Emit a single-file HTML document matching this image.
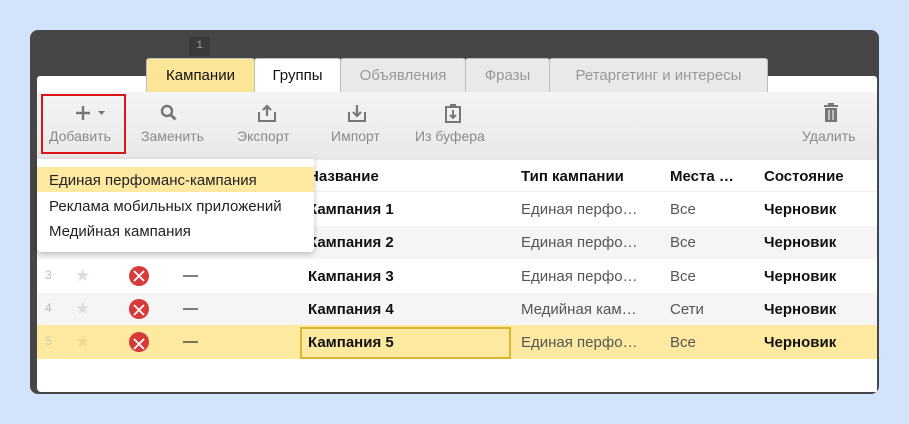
<!DOCTYPE html>
<html><head><meta charset="utf-8"><style>
*{margin:0;padding:0;box-sizing:border-box}
body{width:909px;height:424px;background:#d3e3fb;font-family:"Liberation Sans",sans-serif;position:relative;overflow:hidden}
.win{position:absolute;left:30px;top:30px;width:849px;height:364px;background:#464646;border-radius:8px}
.panel{position:absolute;left:37px;top:76px;width:840px;height:316px;background:#fff;border-radius:3px 3px 0 4px}
.num{position:absolute;left:189px;top:37px;width:21px;height:19px;background:#3a3a3a;color:#9a9a9a;font:11px "Liberation Mono",monospace;text-align:center;line-height:19px}
.tab{position:absolute;top:58px;height:34px;line-height:34px;font-size:15px;text-align:center;border:1px solid #bdbdbd;border-bottom:none;border-radius:3px 3px 0 0}
.tb{position:absolute;left:37px;top:92px;width:840px;height:68px;background:linear-gradient(#f4f4f4,#e8e8e8)}
.btn{position:absolute;top:128px;font-size:14px;color:#8a8a8a}
.ic{position:absolute;top:103px}
.row{position:absolute;left:37px;width:840px;font-size:15px}
.c{position:absolute;top:0;white-space:nowrap}
.b{font-weight:bold;color:#111}
.g{color:#555}
.xi{position:absolute;width:20px;height:20px;border-radius:50%;background:#d63a3a;left:92px}
</style></head><body>
<div class="win"></div>
<div class="num">1</div>
<div class="panel"></div>
<div class="tab" style="left:146px;width:109px;background:#fbe697;color:#111">Кампании</div>
<div class="tab" style="left:254px;width:87px;background:#fff;color:#111">Группы</div>
<div class="tab" style="left:340px;width:126px;background:#e9e9e9;color:#999">Объявления</div>
<div class="tab" style="left:465px;width:85px;background:#e9e9e9;color:#999">Фразы</div>
<div class="tab" style="left:549px;width:219px;background:#e9e9e9;color:#999">Ретаргетинг и интересы</div>
<div class="tb"></div>
<div style="position:absolute;left:41px;top:94px;width:85px;height:60px;border:2px solid #d9141b"></div>
<svg class="ic" style="left:73px" width="40" height="20"><path d="M10 3v14M3 10h14" stroke="#777" stroke-width="2.4"/><path d="M25 8h7l-3.5 4z" fill="#777"/></svg>
<div class="btn" style="left:49px">Добавить</div>
<svg class="ic" style="left:159px" width="20" height="20"><circle cx="8" cy="8" r="5" fill="none" stroke="#777" stroke-width="2.5"/><path d="M11.5 11.5l5 5" stroke="#777" stroke-width="3"/></svg>
<div class="btn" style="left:141px">Заменить</div>
<svg class="ic" style="left:257px" width="20" height="20"><path d="M2 9v9h16V9" fill="none" stroke="#777" stroke-width="2"/><path d="M10 3v10M6 7l4-4 4 4" fill="none" stroke="#777" stroke-width="2.2"/></svg>
<div class="btn" style="left:237px">Экспорт</div>
<svg class="ic" style="left:347px" width="20" height="20"><path d="M2 9v9h16V9" fill="none" stroke="#777" stroke-width="2"/><path d="M10 2v11M6 9l4 4 4-4" fill="none" stroke="#777" stroke-width="2.2"/></svg>
<div class="btn" style="left:331px">Импорт</div>
<svg class="ic" style="left:443px" width="20" height="20"><path d="M3 4h14v15H3z" fill="none" stroke="#777" stroke-width="2"/><rect x="7" y="1" width="6" height="4" fill="#777"/><path d="M10 7v8M7 12l3 3 3-3" fill="none" stroke="#777" stroke-width="2"/></svg>
<div class="btn" style="left:415px">Из буфера</div>
<svg class="ic" style="left:821px" width="20" height="20"><rect x="3" y="2" width="14" height="2" fill="#777"/><rect x="7" y="0" width="6" height="2" fill="#777"/><rect x="4" y="5" width="12" height="14" fill="#777"/><path d="M8 7v10M12 7v10" stroke="#eee" stroke-width="1.2"/></svg>
<div class="btn" style="left:802px">Удалить</div>

<div class="row" style="top:160px;height:32px;border-bottom:1px solid #eee"><div class="c b" style="left:271px;top:8px">Название</div><div class="c b" style="left:484px;top:8px">Тип кампании</div><div class="c b" style="left:633px;top:8px">Места …</div><div class="c b" style="left:727px;top:8px">Состояние</div></div>
<div class="row" style="top:192px;height:34px;background:#fff"><div class="c b" style="left:271px;top:9px">Кампания 1</div><div class="c g" style="left:484px;top:9px">Единая перфо…</div><div class="c g" style="left:633px;top:9px">Все</div><div class="c b" style="left:727px;top:9px">Черновик</div></div>
<div class="row" style="top:226px;height:33px;background:#f5f5f5"><div class="c b" style="left:271px;top:8px">Кампания 2</div><div class="c g" style="left:484px;top:8px">Единая перфо…</div><div class="c g" style="left:633px;top:8px">Все</div><div class="c b" style="left:727px;top:8px">Черновик</div></div>
<div class="row" style="top:259px;height:34px;background:#fff"><div class="c" style="left:8px;top:9px;font-size:12px;color:#bbb">3</div><div class="c" style="left:38px;top:7px;color:#ddd;font-size:17px">★</div><div class="xi" style="top:7px"></div><div class="c" style="left:146px;top:8px">—</div><div class="c b" style="left:271px;top:9px">Кампания 3</div><div class="c g" style="left:484px;top:9px">Единая перфо…</div><div class="c g" style="left:633px;top:9px">Все</div><div class="c b" style="left:727px;top:9px">Черновик</div></div>
<div class="row" style="top:293px;height:32px;background:#f5f5f5"><div class="c" style="left:8px;top:8px;font-size:12px;color:#bbb">4</div><div class="c" style="left:38px;top:6px;color:#ddd;font-size:17px">★</div><div class="xi" style="top:6px"></div><div class="c" style="left:146px;top:7px">—</div><div class="c b" style="left:271px;top:8px">Кампания 4</div><div class="c g" style="left:484px;top:8px">Медийная кам…</div><div class="c g" style="left:633px;top:8px">Сети</div><div class="c b" style="left:727px;top:8px">Черновик</div></div>
<div class="row" style="top:325px;height:34px;background:#fdeaa0"><div class="c" style="left:8px;top:9px;font-size:12px;color:#ccb">5</div><div class="c" style="left:38px;top:7px;color:#f0dc90;font-size:17px">★</div><div class="xi" style="top:7px"></div><div class="c" style="left:146px;top:8px">—</div><div style="position:absolute;left:263px;top:2px;width:211px;height:32px;border:2px solid #d8b630"></div><div class="c b" style="left:271px;top:9px">Кампания 5</div><div class="c g" style="left:484px;top:9px">Единая перфо…</div><div class="c g" style="left:633px;top:9px">Все</div><div class="c b" style="left:727px;top:9px">Черновик</div></div>
<svg style="position:absolute;left:129px;top:266px" width="20" height="90"><g stroke="#fff" stroke-width="1.8"><path d="M5 5l10 10M15 5l-10 10"/><path d="M5 39l10 10M15 39l-10 10"/><path d="M5 73l10 10M15 73l-10 10"/></g></svg>

<div style="position:absolute;left:37px;top:159px;width:277px;height:93px;background:#fff;border-radius:0 0 4px 4px;box-shadow:0 2px 6px rgba(0,0,0,.25);font-size:15px;color:#222">
<div style="position:absolute;left:0;top:8px;width:277px;height:25px;background:#fdeaa0"></div>
<div style="position:absolute;left:12px;top:13px">Единая перфоманс-кампания</div>
<div style="position:absolute;left:12px;top:39px">Реклама мобильных приложений</div>
<div style="position:absolute;left:12px;top:64px">Медийная кампания</div>
</div>
</body></html>
